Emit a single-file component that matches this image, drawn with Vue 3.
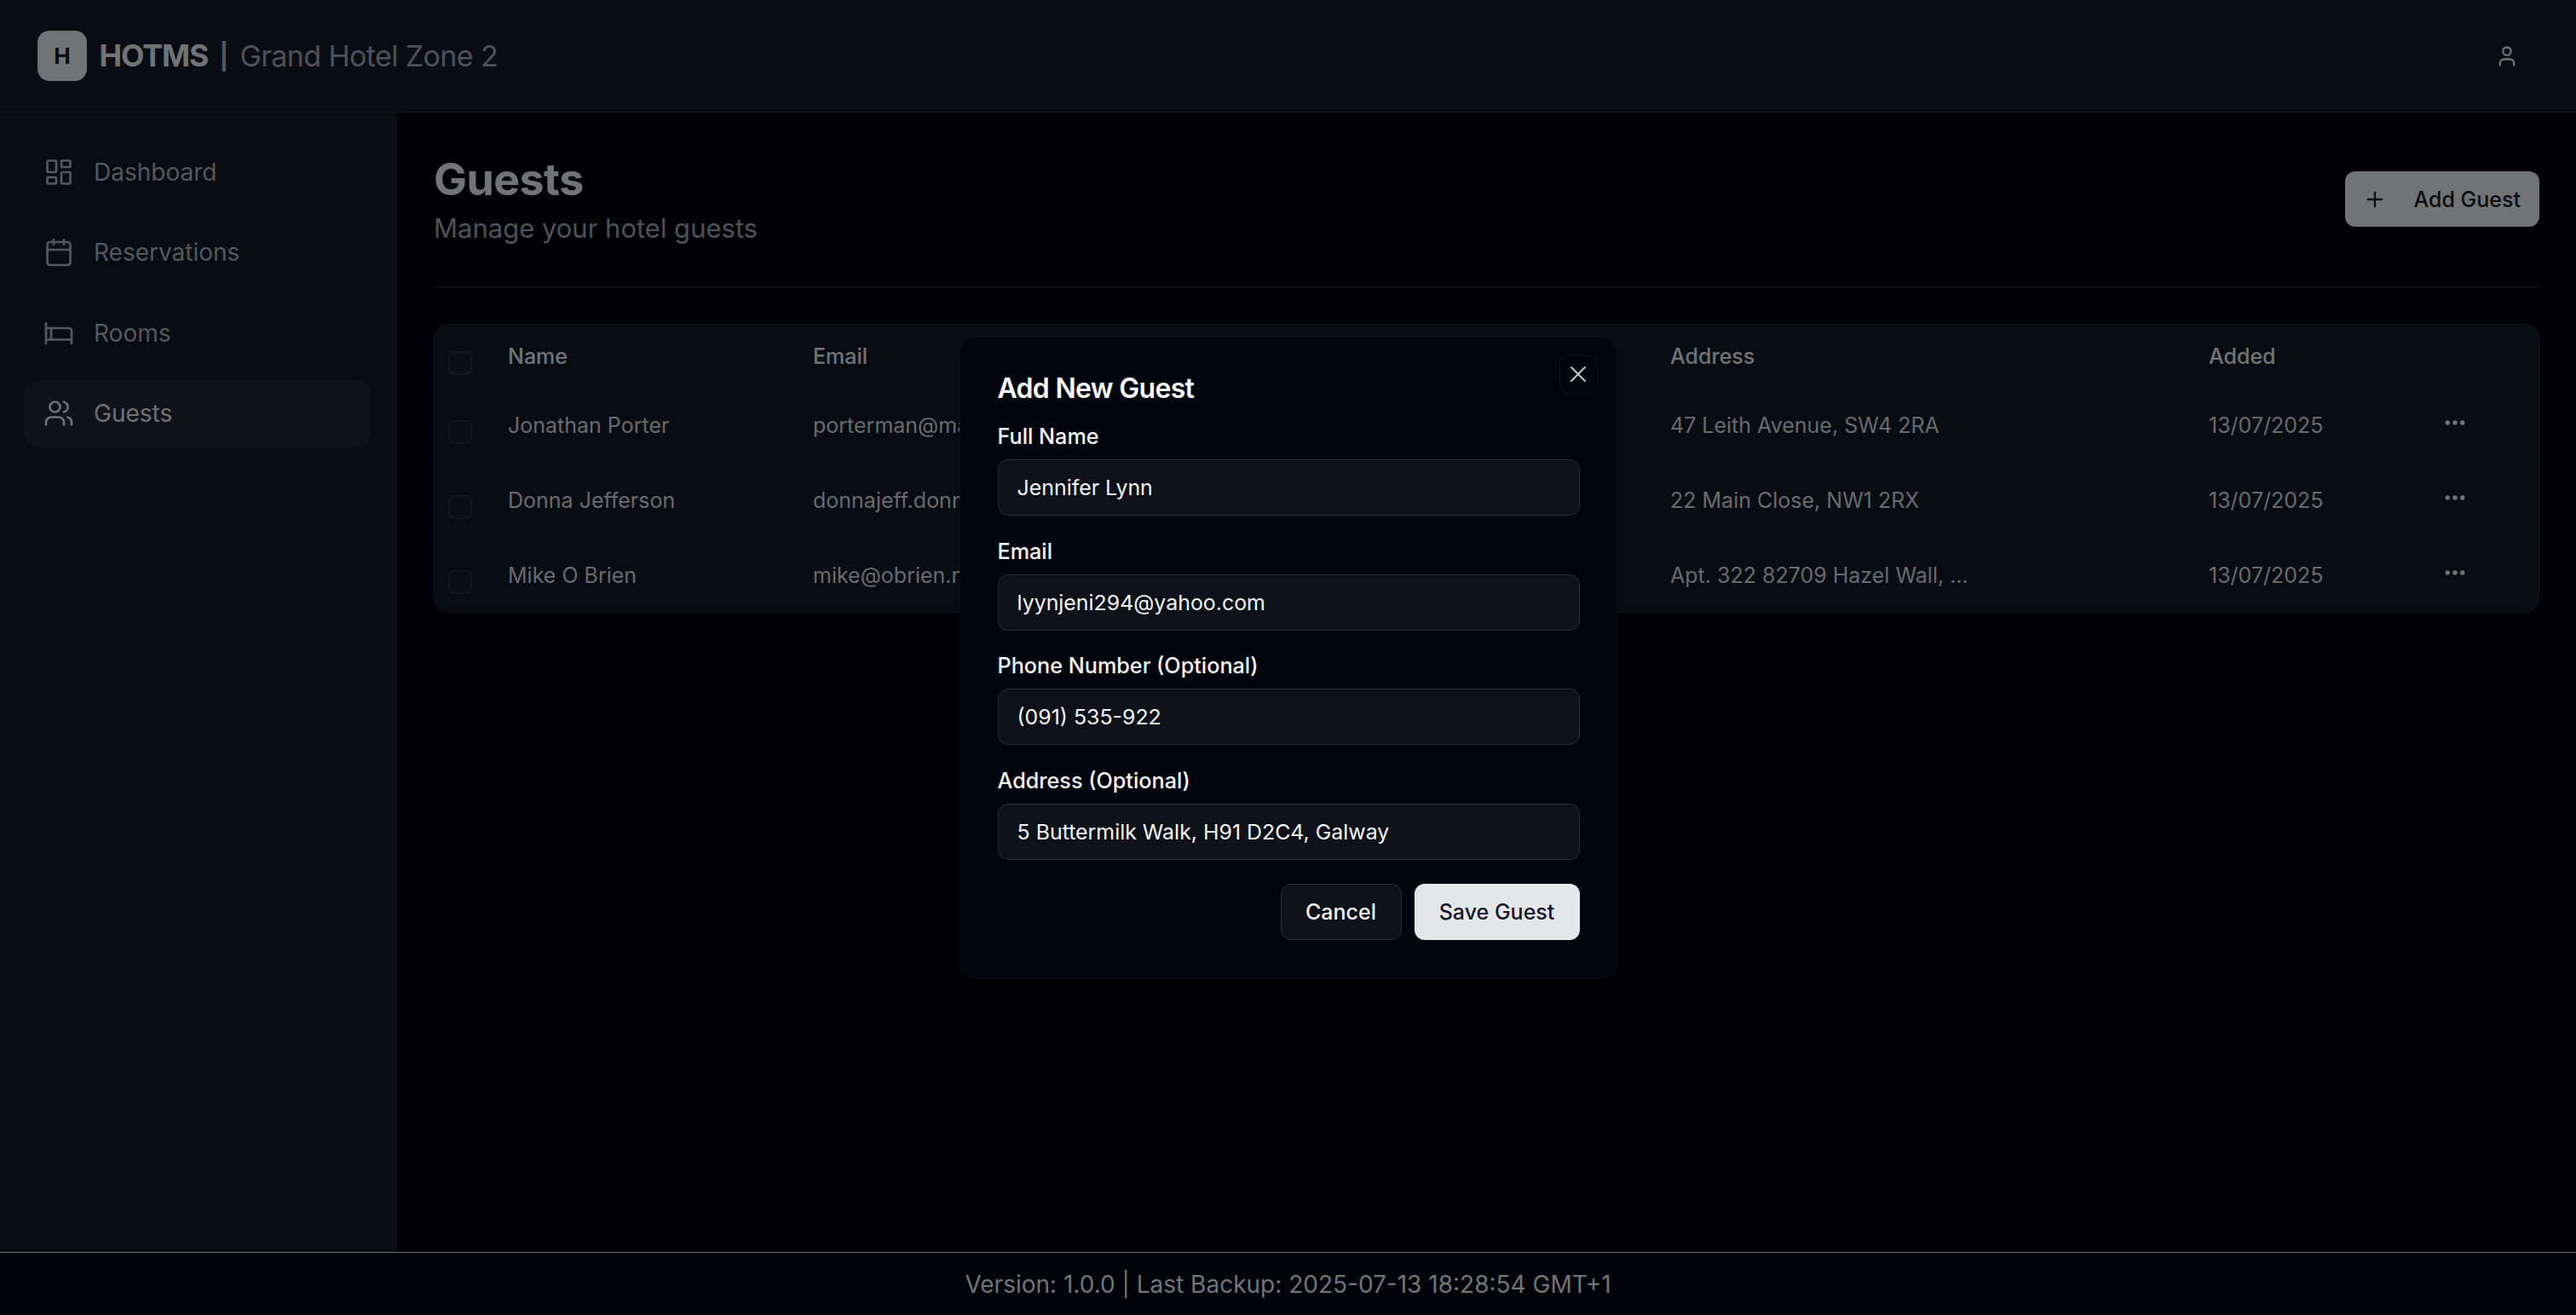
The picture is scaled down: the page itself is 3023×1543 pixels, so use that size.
<script setup>
const nav = [
  { label: 'Dashboard', icon: 'dash' },
  { label: 'Reservations', icon: 'cal' },
  { label: 'Rooms', icon: 'bed' },
  { label: 'Guests', icon: 'users', active: true },
]
const guests = [
  { name: 'Jonathan Porter', email: 'porterman@mail.com', address: '47 Leith Avenue, SW4 2RA', added: '13/07/2025' },
  { name: 'Donna Jefferson', email: 'donnajeff.donna@mail.com', address: '22 Main Close, NW1 2RX', added: '13/07/2025' },
  { name: 'Mike O Brien', email: 'mike@obrien.net', address: 'Apt. 322 82709 Hazel Wall, ...', added: '13/07/2025' },
]
const fields = [
  { label: 'Full Name', value: 'Jennifer Lynn' },
  { label: 'Email', value: 'lyynjeni294@yahoo.com' },
  { label: 'Phone Number (Optional)', value: '(091) 535-922' },
  { label: 'Address (Optional)', value: '5 Buttermilk Walk, H91 D2C4, Galway' },
]
</script>

<template>
  <div class="app">
    <header class="top">
      <div class="brand">
        <div class="logo">H</div>
        <span class="brand-name">HOTMS</span>
        <span class="brand-sep">|</span>
        <span class="brand-hotel">Grand Hotel Zone 2</span>
      </div>
      <svg class="user-icon" viewBox="0 0 24 24" fill="none" stroke="currentColor" stroke-width="2" stroke-linecap="round" stroke-linejoin="round">
        <path d="M19 21v-2a4 4 0 0 0-4-4H9a4 4 0 0 0-4 4v2" />
        <circle cx="12" cy="7" r="4" />
      </svg>
    </header>

    <div class="middle">
      <aside class="side">
        <a v-for="item in nav" :key="item.label" class="nav-item" :class="{ active: item.active }">
          <svg class="nav-icon" viewBox="0 0 24 24" fill="none" stroke="currentColor" stroke-width="2" stroke-linecap="round" stroke-linejoin="round">
            <template v-if="item.icon === 'dash'">
              <rect x="3" y="3" width="7" height="9" rx="1" />
              <rect x="14" y="3" width="7" height="5" rx="1" />
              <rect x="14" y="12" width="7" height="9" rx="1" />
              <rect x="3" y="16" width="7" height="5" rx="1" />
            </template>
            <template v-else-if="item.icon === 'cal'">
              <path d="M8 2v4" />
              <path d="M16 2v4" />
              <rect x="3" y="4" width="18" height="18" rx="2" />
              <path d="M3 10h18" />
            </template>
            <template v-else-if="item.icon === 'bed'">
              <path d="M2 4v16" />
              <path d="M2 8h18a2 2 0 0 1 2 2v10" />
              <path d="M2 17h20" />
              <path d="M6 8v9" />
            </template>
            <template v-else>
              <path d="M16 21v-2a4 4 0 0 0-4-4H6a4 4 0 0 0-4 4v2" />
              <circle cx="9" cy="7" r="4" />
              <path d="M22 21v-2a4 4 0 0 0-3-3.87" />
              <path d="M16 3.13a4 4 0 0 1 0 7.75" />
            </template>
          </svg>
          <span>{{ item.label }}</span>
        </a>
      </aside>

      <main class="main">
        <div class="page-head">
          <div>
            <h1>Guests</h1>
            <p>Manage your hotel guests</p>
          </div>
          <button class="add-btn">
            <svg viewBox="0 0 24 24" fill="none" stroke="currentColor" stroke-width="2" stroke-linecap="round" stroke-linejoin="round">
              <path d="M5 12h14" />
              <path d="M12 5v14" />
            </svg>
            <span>Add Guest</span>
          </button>
        </div>

        <div class="table-wrap">
          <table>
            <colgroup>
              <col class="c-check" />
              <col class="c-name" />
              <col class="c-email" />
              <col class="c-phone" />
              <col class="c-addr" />
              <col class="c-added" />
              <col />
            </colgroup>
            <thead>
              <tr>
                <th><span class="check"></span></th>
                <th>Name</th>
                <th>Email</th>
                <th>Phone</th>
                <th>Address</th>
                <th>Added</th>
                <th></th>
              </tr>
            </thead>
            <tbody>
              <tr v-for="g in guests" :key="g.name">
                <td><span class="check"></span></td>
                <td>{{ g.name }}</td>
                <td>{{ g.email }}</td>
                <td></td>
                <td>{{ g.address }}</td>
                <td>{{ g.added }}</td>
                <td class="actions">
                  <svg viewBox="0 0 24 24" fill="none" stroke="currentColor" stroke-width="2.4" stroke-linecap="round" stroke-linejoin="round">
                    <circle cx="12" cy="12" r="1" />
                    <circle cx="19" cy="12" r="1" />
                    <circle cx="5" cy="12" r="1" />
                  </svg>
                </td>
              </tr>
            </tbody>
          </table>
        </div>
      </main>
    </div>

    <footer class="foot">Version: 1.0.0 | Last Backup: 2025-07-13 18:28:54 GMT+1</footer>

    <div class="overlay">
      <div class="dialog">
        <button class="close">
          <svg viewBox="0 0 24 24" fill="none" stroke="currentColor" stroke-width="1.5" stroke-linecap="round" stroke-linejoin="round">
            <path d="M18 6 6 18" />
            <path d="m6 6 12 12" />
          </svg>
        </button>
        <h2>Add New Guest</h2>
        <div class="fields">
          <div v-for="f in fields" :key="f.label" class="field">
            <label>{{ f.label }}</label>
            <div class="input">{{ f.value }}</div>
          </div>
        </div>
        <div class="dialog-actions">
          <button class="btn-cancel">Cancel</button>
          <button class="btn-save">Save Guest</button>
        </div>
      </div>
    </div>
  </div>
</template>

<style>
html, body { margin: 0; background: #02030a; }
</style>

<style scoped>
.app {
  height: 1543px;
  display: flex;
  flex-direction: column;
  background: #02030a;
  color: #e5e7eb;
  font-family: Inter, "Liberation Sans", sans-serif;
  overflow: hidden;
  position: relative;
}
.top {
  height: 132px;
  box-sizing: border-box;
  flex: none;
  display: flex;
  align-items: center;
  justify-content: space-between;
  padding: 0 67px 0 44px;
  background: #111827;
  border-bottom: 1px solid #262b35;
}
.brand { display: flex; align-items: center; }
.logo {
  width: 58px;
  height: 59px;
  border-radius: 14px;
  background: #e5e7eb;
  color: #111827;
  display: flex;
  align-items: center;
  justify-content: center;
  font-size: 26px;
  font-weight: 700;
  margin-right: 14.5px;
}
.brand-name { font-size: 35.5px; font-weight: 700; letter-spacing: -1px; color: #e5e7eb; margin-right: 13px; }
.brand-sep { font-size: 30px; font-weight: 700; color: #a5aab3; margin-right: 13px; }
.brand-hotel { font-size: 34px; color: #9ca3af; letter-spacing: -0.62px; }
.user-icon { width: 28px; height: 28px; color: #e5e7eb; }

.middle { flex: 1; display: flex; min-height: 0; }
.side {
  width: 465px;
  box-sizing: border-box;
  flex: none;
  padding: 30px 29px 0 29px;
  background: #111827;
  border-right: 1px solid #262b35;
  display: flex;
  flex-direction: column;
  gap: 15.6px;
}
.nav-item {
  height: 79px;
  border-radius: 18px;
  padding: 0 22px;
  display: flex;
  align-items: center;
  gap: 23px;
  font-size: 28px;
  color: #abafb7;
}
.nav-item.active { background: #1f2531; color: #dfe1e5; }
.nav-icon { width: 36px; height: 36px; flex: none; stroke-width: 1.8; }

.main { flex: 1; min-width: 0; padding: 46px 43px 0 44px; }
.page-head {
  display: flex;
  justify-content: space-between;
  align-items: flex-start;
  height: 159px;
  box-sizing: border-box;
  border-bottom: 1px solid #262b35;
}
h1 { margin: 2px 0 0; font-size: 52px; line-height: 62px; font-weight: 700; color: #e5e7eb; letter-spacing: -0.6px; }
.page-head p { margin: 4px 0 0; font-size: 31px; line-height: 44px; color: #9ca3af; }
.add-btn {
  width: 228px;
  height: 65px;
  margin-top: 23px;
  border: none;
  border-radius: 12px;
  background: #e5e7eb;
  color: #111827;
  font: 500 25px Inter, sans-serif;
  display: flex;
  align-items: center;
  justify-content: space-between;
  padding: 0 22px 0 21px;
}
.add-btn svg { width: 28px; height: 28px; }

.table-wrap {
  margin-top: 43px;
  border: 1px solid #262b35;
  border-radius: 18px;
  background: #111827;
  overflow: hidden;
}
table { width: 100%; border-collapse: collapse; table-layout: fixed; font-size: 25px; }
.c-check { width: 64px; }
.c-name { width: 358px; }
.c-email { width: 500px; }
.c-phone { width: 506px; }
.c-addr { width: 632px; }
.c-added { width: 260px; }
th, td { padding: 0 22px; text-align: left; white-space: nowrap; overflow: hidden; }
th { height: 73px; font-weight: 500; color: #e5e7eb; }
td { height: 87px; border-top: 1px solid #161b24; color: #d1d5db; }
th:first-child, td:first-child { padding: 0 0 0 16px; }
.check {
  display: block;
  width: 28px;
  height: 28px;
  box-sizing: border-box;
  border: 2px solid #2a2f3a;
  border-radius: 7px;
  background: #181d27;
  position: relative;
  top: 8px;
}
.actions { overflow: visible; padding-left: 36px; }
.actions svg { display: block; width: 30px; height: 30px; color: #e5e7eb; position: relative; top: -3px; }

.foot {
  height: 74px;
  box-sizing: border-box;
  flex: none;
  border-top: 1px solid #6a6b6e;
  background: #02030a;
  color: #737477;
  font-size: 28px;
  display: flex;
  align-items: center;
  justify-content: center;
  position: relative;
  z-index: 2;
}

.overlay {
  position: absolute;
  inset: 0;
  z-index: 1;
  background: rgba(0, 0, 0, 0.5);
  display: flex;
  align-items: center;
  justify-content: center;
}
.dialog {
  width: 772px;
  box-sizing: border-box;
  padding: 40px 43px 44px 44px;
  background: #02050e;
  border: 1px solid #0a0d16;
  border-radius: 20px;
  position: relative;
}
.close {
  position: absolute;
  top: 21px;
  right: 22px;
  width: 45px;
  height: 45px;
  padding: 0;
  border: 1px solid #12151d;
  border-radius: 10px;
  background: transparent;
  color: #c5c7cb;
  display: flex;
  align-items: center;
  justify-content: center;
}
.close svg { width: 32px; height: 32px; }
h2 { margin: 0 0 22px; font-size: 32px; line-height: 40px; font-weight: 600; letter-spacing: -0.7px; color: #f9fafb; }
.fields { display: flex; flex-direction: column; gap: 27.7px; }
.field { display: flex; flex-direction: column; gap: 13px; }
label { font-size: 25.2px; line-height: 28px; font-weight: 500; color: #f3f4f6; }
.input {
  height: 66px;
  box-sizing: border-box;
  border: 1px solid #2a2e39;
  border-radius: 12px;
  background: #0d111a;
  color: #f3f4f6;
  font-size: 24.9px;
  padding: 0 22px;
  display: flex;
  align-items: center;
}
.dialog-actions { display: flex; justify-content: flex-end; gap: 15px; margin-top: 28px; }
.dialog-actions button {
  height: 66px;
  border-radius: 12px;
  font: 500 25px Inter, sans-serif;
}
.btn-cancel {
  width: 142px;
  border: 1px solid #2a2e39;
  background: #0d111a;
  color: #f3f4f6;
}
.btn-save {
  width: 194px;
  border: none;
  background: #e5e7eb;
  color: #111827;
}
</style>
